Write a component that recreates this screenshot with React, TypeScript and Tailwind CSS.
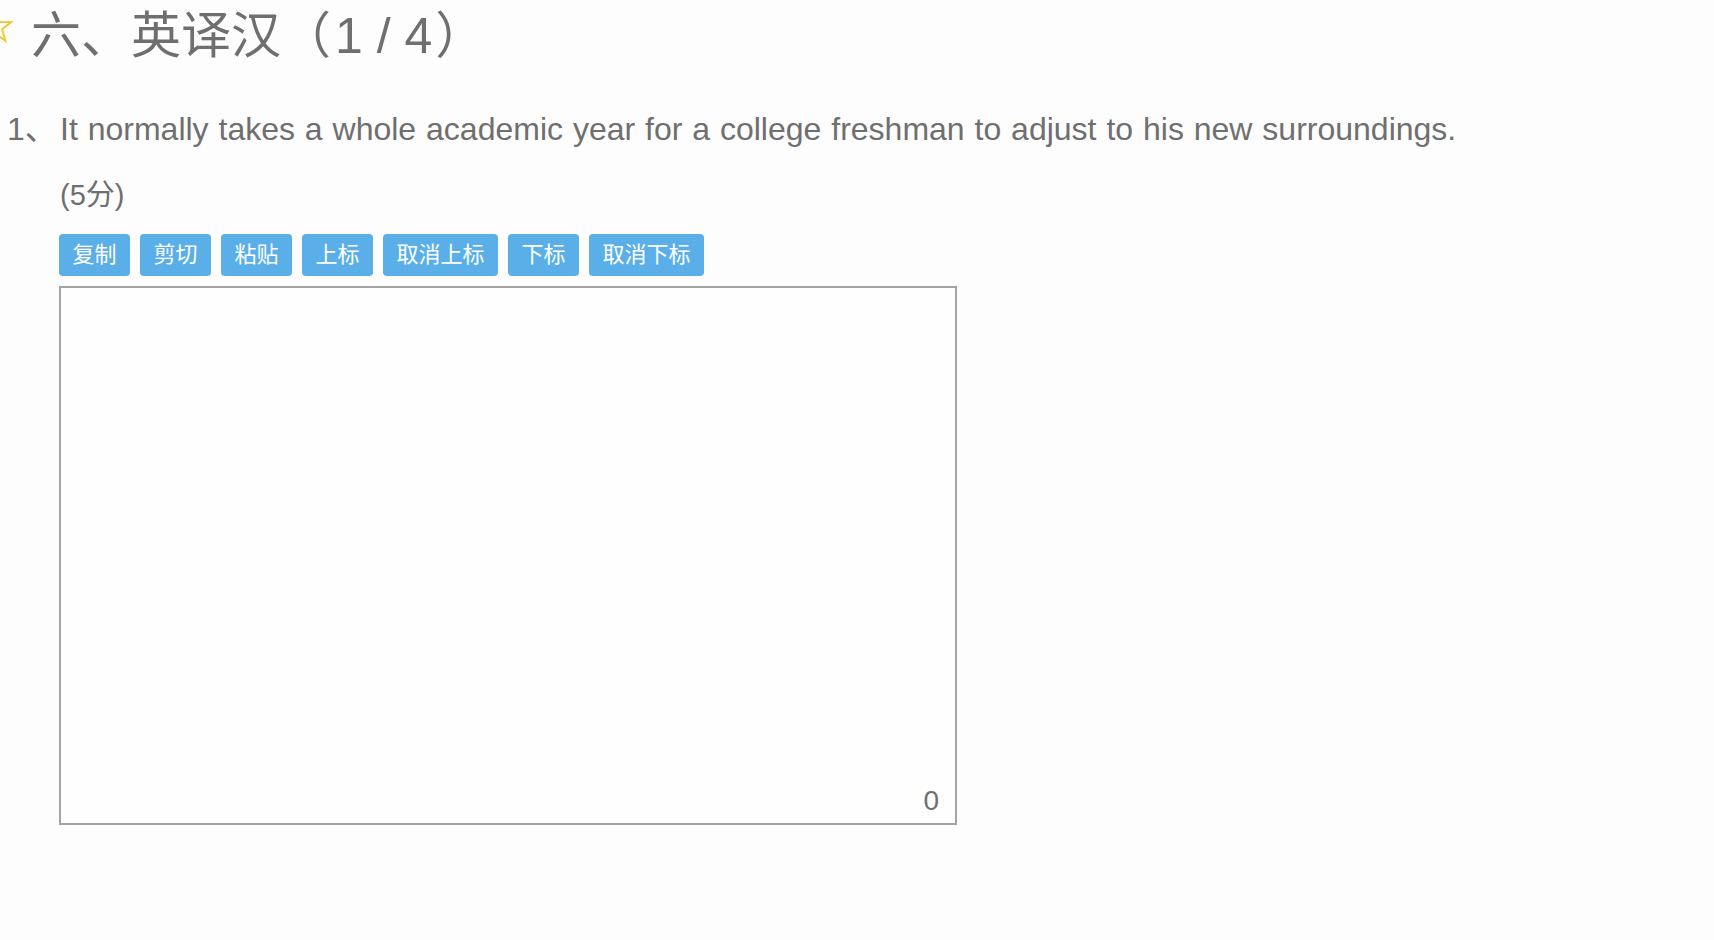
import React from "react";

const buttons = ["复制", "剪切", "粘贴", "上标", "取消上标", "下标", "取消下标"];

export default function App() {
  return (
    <div
      className="min-h-[940px] w-full overflow-hidden bg-[#fdfdfd] text-[#6f6f6f]"
      style={{ fontFamily: '"Liberation Sans", "Noto Sans CJK SC", sans-serif' }}
    >
      <div className="flex items-start pt-[11px]">
        <svg
          className="ml-[-24px] mr-[15px] mt-[-4px] shrink-0"
          width="40"
          height="40"
          viewBox="0 0 40 40"
          fill="none"
          stroke="#f2c523"
          strokeWidth="1.8"
          strokeLinejoin="miter"
        >
          <path d="M20 4 L23.76 15.15 L35.22 15.06 L26.08 22.36 L29.41 33.94 L20 27.04 L10.59 33.94 L13.92 22.36 L4.78 15.06 L16.24 15.15 Z" />
        </svg>
        <h1 className="text-[50px] font-normal leading-[50px]">
          六、英译汉（<span className="ml-[4px] mr-[3px]">1 / 4</span>）
        </h1>
      </div>

      <div className="mt-[48px] flex text-[32px] leading-[40px]">
        <span className="ml-[7px] w-[53px] shrink-0">1、</span>
        <span className="[word-spacing:1px]">
          It normally takes a whole academic year for a college freshman to adjust to his new surroundings.
        </span>
      </div>

      <div className="ml-[60px] mt-[28px] text-[29px] leading-[36px]">(5分)</div>

      <div className="ml-[59px] mt-[21px] flex gap-[10px]">
        {buttons.map((b) => (
          <button
            key={b}
            className="h-[42px] rounded-[4px] bg-[#5aafe8] px-[13.5px] text-[22px] leading-[42px] text-white"
          >
            {b}
          </button>
        ))}
      </div>

      <div className="ml-[59px] mt-[10px] flex h-[539px] w-[898px] items-end justify-end border-2 border-[#a3a3a3] bg-[#fefefe] pb-[6px] pr-[16px]">
        <span className="text-[28px] leading-[32px] text-[#707070]">0</span>
      </div>
    </div>
  );
}
